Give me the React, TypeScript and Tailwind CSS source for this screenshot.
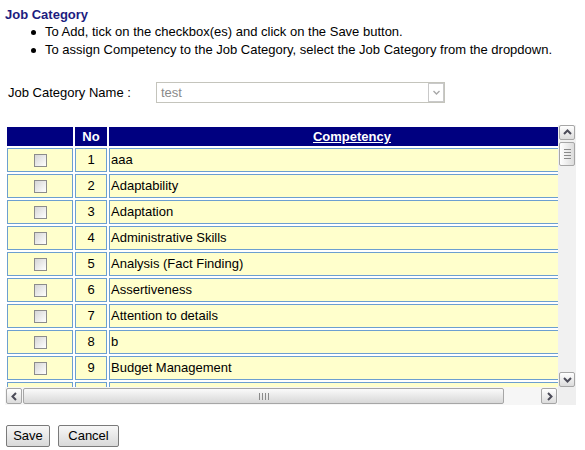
import React from 'react';

const COMPETENCIES = [
  'aaa',
  'Adaptability',
  'Adaptation',
  'Administrative Skills',
  'Analysis (Fact Finding)',
  'Assertiveness',
  'Attention to details',
  'b',
  'Budget Management'
];

type Dir = 'up' | 'down' | 'left' | 'right';

function Chevron({ dir }: { dir: Dir }) {
  const pts = {
    up: '3,8 6.5,4.5 10,8',
    down: '3,5 6.5,8.5 10,5',
    left: '8,3 4.5,6.5 8,10',
    right: '5,3 8.5,6.5 5,10'
  }[dir];
  return (
    <svg width="13" height="13" viewBox="0 0 13 13">
      <polyline points={pts} fill="none" stroke="#4b4b58" strokeWidth="2" />
    </svg>
  );
}

function ScrollButton({ dir }: { dir: Dir }) {
  const size = dir === 'up' || dir === 'down' ? 'h-[15px] w-[16px]' : 'h-[16px] w-[16px]';
  return (
    <div className={`flex ${size} shrink-0 items-center justify-center rounded-[2px] border border-[#a6a6a6] bg-linear-to-b from-white to-[#dcdcdc]`}>
      <Chevron dir={dir} />
    </div>
  );
}

function Checkbox() {
  return (
    <span className="inline-block h-[13px] w-[13px] border border-[#8c8c8c] bg-linear-to-br from-[#d6d6d6] to-white align-middle" />
  );
}

export default function App() {
  return (
    <div className="min-h-[450px] w-[585px] bg-white pl-[5px] pt-[7px] font-['Liberation_Sans',Arial,sans-serif] text-[13px] text-black">

      {/* Heading */}
      <h1 className="text-[13px] font-bold leading-4 text-[#1c1c80]">Job Category</h1>

      <ul className="leading-[18px]">
        <li className="flex">
          <span className="flex w-[40px] justify-end pr-[9px] pt-[7px]">
            <span className="h-[5px] w-[5px] rounded-full bg-black" />
          </span>
          To Add, tick on the checkbox(es) and click on the Save button.
        </li>
        <li className="flex">
          <span className="flex w-[40px] justify-end pr-[9px] pt-[7px]">
            <span className="h-[5px] w-[5px] rounded-full bg-black" />
          </span>
          To assign Competency to the Job Category, select the Job Category from the dropdown.
        </li>
      </ul>

      {/* Job category select */}
      <div className="mt-[23px] flex items-center">
        <label className="ml-[3px] w-[148px] leading-4">Job Category Name :</label>
        <div className="flex h-[21px] w-[289px] items-center border border-[#c4c4bc] bg-white">
          <span className="flex-1 pl-[4px] leading-4 text-[#8a8a8a]">test</span>
          <div className="flex h-[19px] w-[16px] items-center justify-center border border-[#c9c9c9] bg-white">
            <svg width="11" height="11" viewBox="0 0 11 11">
              <polyline points="2.5,4 5.5,7 8.5,4" fill="none" stroke="#a8a8a8" strokeWidth="1.4" />
            </svg>
          </div>
        </div>
      </div>

      {/* Competency list */}
      <div className="mt-[22px] grid h-[280px] w-[571px] grid-cols-[553px_18px] grid-rows-[262px_18px]">

        <div className="overflow-hidden">
          <table className="w-[592px] table-fixed border-separate border-spacing-[2px]">
            <colgroup>
              <col className="w-[66px]" />
              <col className="w-[32px]" />
              <col className="w-[486px]" />
            </colgroup>
            <thead>
              <tr className="h-[19px] bg-[#000080] font-bold text-white">
                <td className="p-0" />
                <td className="p-0 text-center leading-[19px]">No</td>
                <td className="p-0 text-center leading-[19px] underline">Competency</td>
              </tr>
            </thead>
            <tbody>
              {COMPETENCIES.map((name, i) => (
                <tr key={name}>
                  <td className="border border-[#6c9fd0] bg-[#ffffcc] p-0">
                    <div className="flex h-[22px] items-center justify-center pl-[1px]">
                      <Checkbox />
                    </div>
                  </td>
                  <td className="border border-[#6c9fd0] bg-[#ffffcc] p-0">
                    <div className="flex h-[22px] items-center justify-center">{i + 1}</div>
                  </td>
                  <td className="border border-[#6c9fd0] bg-[#ffffcc] p-0">
                    <div className="flex h-[22px] items-center pl-[1px]">{name}</div>
                  </td>
                </tr>
              ))}
              {/* row cut off by the scroll area */}
              <tr>
                <td className="border border-[#6c9fd0] bg-[#ffffcc] p-0">
                  <div className="flex h-[22px] items-center justify-center pl-[1px]">
                    <Checkbox />
                  </div>
                </td>
                <td className="border border-[#6c9fd0] bg-[#ffffcc] p-0">
                  <div className="h-[22px]" />
                </td>
                <td className="border border-[#6c9fd0] bg-[#ffffcc] p-0">
                  <div className="h-[22px]" />
                </td>
              </tr>
            </tbody>
          </table>
        </div>

        {/* Vertical scrollbar */}
        <div className="flex flex-col bg-[#f1f1f1] px-[1px]">
          <ScrollButton dir="up" />
          <div className="mt-[2px] flex h-[24px] flex-col items-center justify-center gap-[2px] rounded-[2px] border border-[#a6a6a6] bg-linear-to-r from-white to-[#dcdcdc]">
            <span className="h-px w-[7px] bg-[#8a8a8a]" />
            <span className="h-px w-[7px] bg-[#8a8a8a]" />
            <span className="h-px w-[7px] bg-[#8a8a8a]" />
            <span className="h-px w-[7px] bg-[#8a8a8a]" />
          </div>
          <div className="flex-1" />
          <ScrollButton dir="down" />
        </div>

        {/* Horizontal scrollbar */}
        <div className="flex items-center bg-[#f6f6f6] pl-[1px] pr-[1px]">
          <ScrollButton dir="left" />
          <div className="ml-px flex h-[16px] w-[481px] items-center justify-center gap-[2px] rounded-[2px] border border-[#a6a6a6] bg-linear-to-b from-[#fafafa] to-[#d8d8d8]">
            <span className="h-[7px] w-px bg-[#8a8a8a]" />
            <span className="h-[7px] w-px bg-[#8a8a8a]" />
            <span className="h-[7px] w-px bg-[#8a8a8a]" />
            <span className="h-[7px] w-px bg-[#8a8a8a]" />
          </div>
          <div className="flex-1" />
          <ScrollButton dir="right" />
        </div>

        <div className="bg-[#efefef]" />
      </div>

      {/* Actions */}
      <div className="ml-px mt-[20px] flex gap-[8px]">
        <button className="h-[22px] w-[44px] rounded-[2px] border border-[#7a7a7a] bg-linear-to-b from-[#f7f7f7] to-[#d9d9d9] text-[13px] leading-4">
          Save
        </button>
        <button className="h-[22px] w-[61px] rounded-[2px] border border-[#7a7a7a] bg-linear-to-b from-[#f7f7f7] to-[#d9d9d9] text-[13px] leading-4">
          Cancel
        </button>
      </div>

    </div>
  );
}
